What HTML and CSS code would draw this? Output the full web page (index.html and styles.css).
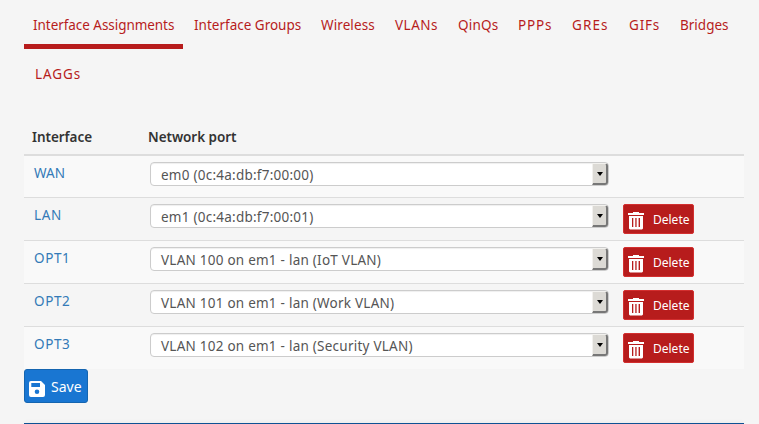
FILE: index.html
```
<!DOCTYPE html>
<html lang="en">
<head>
<meta charset="utf-8">
<title>Interface Assignments</title>
<link rel="stylesheet" href="styles.css">
</head>
<body>
<svg class="sprite" aria-hidden="true">
  <symbol id="trash" viewBox="0 0 16 18"><path fill="currentColor" fill-rule="evenodd" d="M5 0h6v1h5v2H0V1h5zM1 4h14v12.500l-1 1H2l-1-1zM4 6v9h1.300V6zM7.300 6v9h1.300V6zM10.600 6v9H12V6z"/></symbol>
  <symbol id="disk" viewBox="0 0 16 16"><path fill="currentColor" fill-rule="evenodd" d="M2 0h10l4 4v10a2 2 0 0 1-2 2H2a2 2 0 0 1-2-2V2a2 2 0 0 1 2-2zM2.300 2v4H11V2zM8 8.500a2.300 2.300 0 1 0 0 4.600 2.300 2.300 0 0 0 0-4.600z"/></symbol>
</svg>
<main class="page">
  <nav class="tabs">
    <a class="tab active">Interface Assignments</a>
    <a class="tab groups">Interface Groups</a>
    <a class="tab wireless">Wireless</a>
    <a class="tab vlans">VLANs</a>
    <a class="tab qinqs">QinQs</a>
    <a class="tab ppps">PPPs</a>
    <a class="tab gres">GREs</a>
    <a class="tab gifs">GIFs</a>
    <a class="tab bridges">Bridges</a>
    <a class="tab laggs">LAGGs</a>
  </nav>
  <section class="table">
    <div class="head"><span class="h1">Interface</span><span class="h2">Network port</span></div>
    <div class="row first"><a class="name wan">WAN</a><div class="select"><span>em0 (0c:4a:db:f7:00:00)</span><i class="arrow"></i></div></div>
    <div class="row"><a class="name">LAN</a><div class="select"><span>em1 (0c:4a:db:f7:00:01)</span><i class="arrow"></i></div><button class="delete"><svg><use href="#trash"/></svg><span>Delete</span></button></div>
    <div class="row"><a class="name">OPT1</a><div class="select"><span>VLAN 100 on em1 - lan (IoT VLAN)</span><i class="arrow"></i></div><button class="delete"><svg><use href="#trash"/></svg><span>Delete</span></button></div>
    <div class="row"><a class="name">OPT2</a><div class="select"><span>VLAN 101 on em1 - lan (Work VLAN)</span><i class="arrow"></i></div><button class="delete"><svg><use href="#trash"/></svg><span>Delete</span></button></div>
    <div class="row"><a class="name">OPT3</a><div class="select"><span>VLAN 102 on em1 - lan (Security VLAN)</span><i class="arrow"></i></div><button class="delete"><svg><use href="#trash"/></svg><span>Delete</span></button></div>
  </section>
  <button class="save"><svg><use href="#disk"/></svg><span>Save</span></button>
  <div class="panel"></div>
</main>
</body>
</html>
```
FILE: styles.css
```
* { box-sizing: border-box; }
body { margin: 0; background: #f5f5f5; font: 13.5px/20px "Noto Sans", sans-serif; }
.sprite { display: none; }
.page { width: 720px; margin-left: 24px; }
.tabs { display: flex; flex-wrap: wrap; height: 119px; align-content: flex-start; color: #b71c1c; }
.tab { height: 49px; padding-top: 15px; white-space: nowrap; }
.active { width: 159px; padding-left: 9px; border-bottom: 5px solid #b71c1c; letter-spacing: -0.05px; }
.groups { width: 138px; padding-left: 11px; }
.wireless { width: 74px; letter-spacing: 0.1px; }
.vlans { width: 63px; letter-spacing: 0.5px; }
.qinqs { width: 60px; letter-spacing: 0.2px; }
.ppps { width: 54px; letter-spacing: 0.8px; }
.gres { width: 57px; letter-spacing: 1.1px; }
.gifs { width: 51px; letter-spacing: 0.8px; }
.bridges { width: 60px; }
.laggs { padding-left: 11px; letter-spacing: 0.9px; }
.head { display: flex; height: 37px; padding: 8px 0 0 8px; border-bottom: 2px solid #ddd; font-weight: 600; color: #333; letter-spacing: -0.05px; }
.h1 { width: 116px; }
.row { display: flex; height: 43px; border-top: 1px solid #ddd; padding: 6px 0 0 10px; }
.row.first { height: 41px; border-top: 0; }
.row:nth-child(even) { background: #f9f9f9; }
.name { width: 116px; padding-top: 1px; color: #337ab7; letter-spacing: 0.6px; }
.name.wan { letter-spacing: 0.1px; }
.select { display: flex; justify-content: space-between; width: 459px; height: 24px; border: 1px solid #ccc; border-radius: 4px; background: #fff; color: #555; padding-left: 10px; line-height: 25px; letter-spacing: 0.24px; box-shadow: inset 0 1px 1px #0001; white-space: nowrap; }
.arrow { display: flex; justify-content: center; align-items: center; width: 16px; height: 22px; background: #dcdad5; border: solid; border-width: 1px 2px 2px 1px; border-color: #f2f1ee #777 #777 #f2f1ee; border-radius: 0 3px 3px 0; }
.arrow::before { content: ""; border: solid transparent; border-width: 4px 3.5px 0; border-top-color: #000; }
button { display: flex; font-family: inherit; color: #fff; padding: 0; }
.delete { width: 71px; height: 30px; margin-left: 14px; background: #b71c1c; border: 1px solid #d32f2f; border-radius: 2px; font-size: 12px; line-height: 29px; }
.delete svg { width: 16px; height: 18px; margin: 7px 9px 0 4px; }
.save { width: 64px; height: 34px; background: #1976d2; border: 1px solid #1565b0; border-radius: 3px; font-size: 14px; line-height: 34px; }
.save svg { width: 16px; height: 16px; margin: 11px 6px 0 4px; }
.panel { height: 1px; margin-top: 20px; background: #0d5294; box-shadow: 0 1px 5px #0003; }
```
